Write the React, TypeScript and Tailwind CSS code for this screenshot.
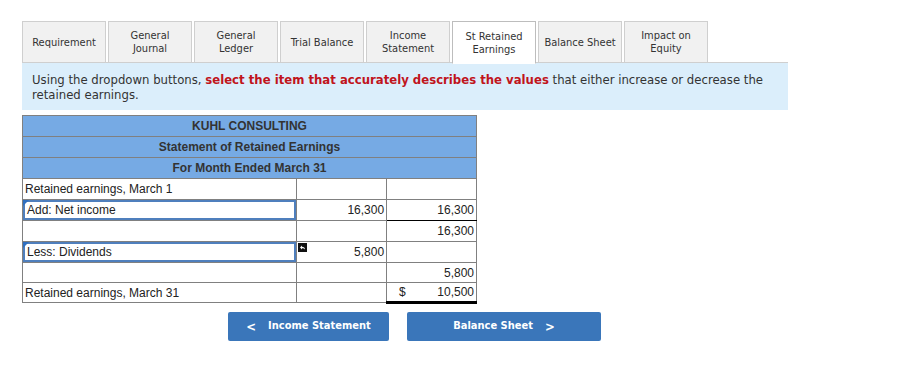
import React from 'react';

const tabs = [
  { label: ['Requirement'] },
  { label: ['General', 'Journal'] },
  { label: ['General', 'Ledger'] },
  { label: ['Trial Balance'] },
  { label: ['Income', 'Statement'] },
  { label: ['St Retained', 'Earnings'], active: true },
  { label: ['Balance Sheet'] },
  { label: ['Impact on', 'Equity'] },
];

const UndoIcon = () => (
  <svg width="9" height="9" viewBox="0 0 9 9" className="absolute left-[1px] top-[1px]">
    <rect width="9" height="9" fill="#111" />
    <path d="M2 4.5 L4 2.5 L4 3.7 C5.8 3.7 7 4.6 7 6.6 C6.4 5.5 5.4 5.2 4 5.2 L4 6.5 Z" fill="#fff" />
  </svg>
);

const Select = ({ text }: { text: string }) => (
  <div className="relative h-[20px] border-2 border-[#4f7fbd] pl-[2px] flex items-center leading-none">
    <span className="absolute -left-[2px] -top-[2px] w-0 h-0 border-t-[6px] border-t-[#2f6fc0] border-r-[6px] border-r-transparent" />
    {text}
  </div>
);

export default function App() {
  const cell = 'border border-[#808080] h-[21px] px-[2px] py-0 leading-[14px] align-middle';
  const cellS = 'border border-[#808080] h-[20px] px-[2px] py-0 leading-[14px] align-middle';
  return (
    <div className="w-[910px] h-[390px] bg-white pl-[22px] pt-[21px] text-[#222]">
      <div className="flex gap-[2px] w-[766px] border-b border-[#cfcfcf] h-[42px]">
        {tabs.map((t, i) => (
          <div
            key={i}
            className={`w-[84px] flex flex-col items-center justify-center border text-[11px] leading-[13px] text-[#333] font-['DejaVu_Sans_Condensed','DejaVu_Sans',sans-serif] ${
              t.active ? 'bg-white border-[#bdbdbd] border-b-white h-[43px]' : 'bg-[#f1f1f1] border-[#cfcfcf] border-b-0 h-[41px]'
            }`}
          >
            {t.label.map((l) => (
              <span key={l}>{l}</span>
            ))}
          </div>
        ))}
      </div>

      <div className="w-[766px] h-[47px] bg-[#dbeefb] px-[10px] pt-[9px] text-[13px] leading-[15px] text-[#333] font-['DejaVu_Sans_Condensed','DejaVu_Sans',sans-serif]">
        Using the dropdown buttons,{' '}
        <span className="font-bold text-[#c0141c]">select the item that accurately describes the values</span> that either
        increase or decrease the retained earnings.
      </div>

      <table className="mt-[5px] border-collapse w-[455px] text-[12px] font-['Liberation_Sans',Arial,sans-serif] text-[#222]">
        <colgroup>
          <col className="w-[275px]" />
          <col className="w-[90px]" />
          <col className="w-[90px]" />
        </colgroup>
        <tbody>
          {['KUHL CONSULTING', 'Statement of Retained Earnings', 'For Month Ended March 31'].map((h) => (
            <tr key={h}>
              <td colSpan={3} className="border border-[#808080] bg-[#76aae4] h-[21px] p-0 text-center font-bold text-[#333]">
                {h}
              </td>
            </tr>
          ))}
          <tr>
            <td className={cell}>Retained earnings, March 1</td>
            <td className={cell}></td>
            <td className={cell}></td>
          </tr>
          <tr>
            <td className="border border-[#808080] h-[21px] p-0">
              <Select text="Add: Net income" />
            </td>
            <td className={`${cell} text-right`}>16,300</td>
            <td className={`${cell} text-right border-b-black`}>16,300</td>
          </tr>
          <tr>
            <td className={cell}></td>
            <td className={cell}></td>
            <td className={`${cell} text-right border-t-black`}>16,300</td>
          </tr>
          <tr>
            <td className="border border-[#808080] h-[21px] p-0">
              <Select text="Less: Dividends" />
            </td>
            <td className={`${cell} text-right relative`}>
              <UndoIcon />
              5,800
            </td>
            <td className={cell}></td>
          </tr>
          <tr>
            <td className={cellS}></td>
            <td className={cellS}></td>
            <td className={`${cellS} text-right`}>5,800</td>
          </tr>
          <tr>
            <td className={cellS}>Retained earnings, March 31</td>
            <td className={cellS}></td>
            <td className={`${cellS} border-b-[3px] border-b-black`}>
              <div className="flex justify-between pl-[10px]">
                <span>$</span>
                <span>10,500</span>
              </div>
            </td>
          </tr>
        </tbody>
      </table>

      <div className="flex gap-[18px] ml-[206px] mt-[8px] font-['DejaVu_Sans_Condensed','DejaVu_Sans',sans-serif] text-[11px] font-bold text-white">
        <button className="w-[161px] h-[29px] bg-[#3a76ba] rounded-[2px] flex items-center justify-center gap-[12px]">
          <span className="text-[13px]">&lt;</span>
          <span>Income Statement</span>
        </button>
        <button className="w-[194px] h-[29px] bg-[#3a76ba] rounded-[2px] flex items-center justify-center gap-[12px]">
          <span>Balance Sheet</span>
          <span className="text-[13px]">&gt;</span>
        </button>
      </div>
    </div>
  );
}
